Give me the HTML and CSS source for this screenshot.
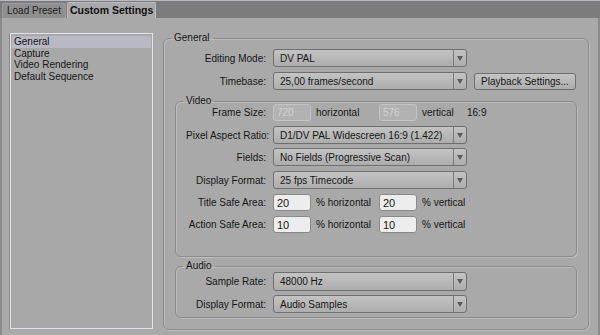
FILE: index.html
```html
<!DOCTYPE html>
<html>
<head>
<meta charset="utf-8">
<link rel="stylesheet" href="styles.css">
</head>
<body>
<div class="tabbar">
  <div class="tab">Load Preset</div>
  <div class="tab active">Custom Settings</div>
</div>
<div class="main">
  <ul class="list">
    <li class="sel">General</li>
    <li>Capture</li>
    <li>Video Rendering</li>
    <li>Default Sequence</li>
  </ul>
  <fieldset class="group general">
    <legend>General</legend>
    <div class="row r1 g"><span class="lbl">Editing Mode:</span><div class="select"><span>DV PAL</span><i class="arr"></i></div></div>
    <div class="row r2 g"><span class="lbl">Timebase:</span><div class="select"><span>25,00 frames/second</span><i class="arr"></i></div><div class="btn">Playback Settings...</div></div>
    <fieldset class="group sub video">
      <legend>Video</legend>
      <div class="row fs"><span class="lbl">Frame Size:</span><div class="input dis">720</div><span class="unit">horizontal</span><div class="input dis">576</div><span class="unit">vertical</span><span class="ratio">16:9</span></div>
      <div class="row sr"><span class="lbl">Pixel Aspect Ratio:</span><div class="select"><span>D1/DV PAL Widescreen 16:9 (1.422)</span><i class="arr"></i></div></div>
      <div class="row sr2"><span class="lbl">Fields:</span><div class="select"><span>No Fields (Progressive Scan)</span><i class="arr"></i></div></div>
      <div class="row sr"><span class="lbl">Display Format:</span><div class="select"><span>25 fps Timecode</span><i class="arr"></i></div></div>
      <div class="row ir"><span class="lbl">Title Safe Area:</span><div class="input">20</div><span class="unit">% horizontal</span><div class="input">20</div><span class="unit">% vertical</span></div>
      <div class="row ir"><span class="lbl">Action Safe Area:</span><div class="input">10</div><span class="unit">% horizontal</span><div class="input">10</div><span class="unit">% vertical</span></div>
    </fieldset>
    <fieldset class="group sub audio">
      <legend>Audio</legend>
      <div class="row a1"><span class="lbl">Sample Rate:</span><div class="select"><span>48000 Hz</span><i class="arr"></i></div></div>
      <div class="row a2"><span class="lbl">Display Format:</span><div class="select"><span>Audio Samples</span><i class="arr"></i></div></div>
    </fieldset>
  </fieldset>
</div>
</body>
</html>
```
FILE: styles.css
```css
* { box-sizing: border-box; }
html, body { margin: 0; padding: 0; }
body {
  width: 600px;
  height: 335px;
  overflow: hidden;
  background: #a9a9a9;
  font-family: "Liberation Sans", Arial, sans-serif;
  font-size: 10px;
  color: #161616;
}
.tabbar {
  height: 18px;
  background: #7c7c7c;
  border-top: 1px solid #b8b8c8;
  display: flex;
  align-items: flex-end;
  padding-left: 2px;
  gap: 1px;
}
.tab {
  height: 15px;
  line-height: 14px;
  padding: 0 4px;
  background: #8f8f8f;
  border: 1px solid #9c9c9c;
  border-bottom: none;
  border-radius: 2px 2px 0 0;
  color: #1c1c1c;
}
.tab.active {
  height: 16px;
  background: #a9a9a9;
  border-color: #bdbdbd;
  font-weight: bold;
  font-size: 10.5px;
  color: #111;
  padding: 0 2px;
}
.main {
  height: 317px;
  display: flex;
  align-items: stretch;
  padding: 14px 9px 5px 8px;
  border-left: 2px solid #8a8a8a;
  border-right: 2px solid #8a8a8a;
}
.list {
  list-style: none;
  margin: 1px 10px 1px 0;
  padding: 2px 1px 0 1px;
  width: 143px;
  border: 1px solid #e2e2ec;
  box-shadow: -1px 0 0 #8c8c8c;
  background: #a8a8a8;
}
.list li {
  height: 11.7px;
  line-height: 11.7px;
  padding-left: 2px;
}
.list li.sel { background: #b9b9c3; }
.group {
  margin: 0;
  border: 1px solid #8b8b8b;
  border-radius: 6px;
  box-shadow: inset 1px 1px 0 #bcbcbc, 1px 1px 0 #bcbcbc;
  min-width: 0;
}
.group legend {
  padding: 0 3px;
  line-height: 12px;
  margin-left: -3px;
  color: #161616;
}
.general {
  flex: 1;
  padding: 0 11px 10px 10px;
}
.sub {
  margin-left: 1px;
  padding: 0 10px 0 10px;
}
.row {
  display: flex;
  align-items: center;
}
.lbl {
  width: 92px;
  text-align: right;
  margin-right: 7px;
  flex: none;
  white-space: nowrap;
}
.sub .lbl { width: 80px; }
.r1 { margin-top: 5px; height: 18px; }
.r2 { margin-top: 5px; height: 18px; }
.video { margin-top: 5px; padding-bottom: 23px; }
.fs { margin-top: -3px; height: 17px; }
.sr { margin-top: 5px; height: 18px; }
.sr2 { margin-top: 4px; height: 18px; }
.ir { margin-top: 5px; height: 17px; }
.audio { margin-top: 3px; padding-bottom: 4px; }
.a1 { margin-top: 0; height: 19px; }
.a2 { margin-top: 4px; height: 18px; }
.select {
  width: 194px;
  height: 100%;
  border: 1px solid #6f6f6f;
  border-radius: 3px;
  background: linear-gradient(#c3c3c3, #adadad);
  display: flex;
  align-items: center;
  white-space: nowrap;
}
.select span {
  flex: 1;
  padding-left: 6px;
  overflow: hidden;
}
.arr {
  width: 13px;
  height: 100%;
  border-left: 1px solid #7a7a7a;
  position: relative;
  flex: none;
}
.arr::after {
  content: "";
  position: absolute;
  left: 3px;
  top: 6px;
  border-left: 3px solid transparent;
  border-right: 3px solid transparent;
  border-top: 5px solid #5a5a5a;
}
.btn {
  margin-left: 7px;
  width: 102px;
  height: 17px;
  border: 1px solid #6f6f6f;
  border-radius: 3px;
  background: linear-gradient(#c3c3c3, #adadad);
  text-align: center;
  line-height: 15px;
}
.input {
  width: 38px;
  height: 100%;
  border: 1px solid #8a8a8a;
  border-radius: 3px;
  background: #ededed;
  padding-left: 3px;
  display: flex;
  align-items: center;
  font-size: 11px;
  flex: none;
}
.input.dis {
  background: #b2b2b2;
  border-color: #c4c4c4;
  color: #d2d2d2;
  font-size: 10px;
}
.unit {
  width: 68px;
  padding-left: 5px;
  flex: none;
}
.ratio { padding-left: 0; margin-left: -18px; }
```
